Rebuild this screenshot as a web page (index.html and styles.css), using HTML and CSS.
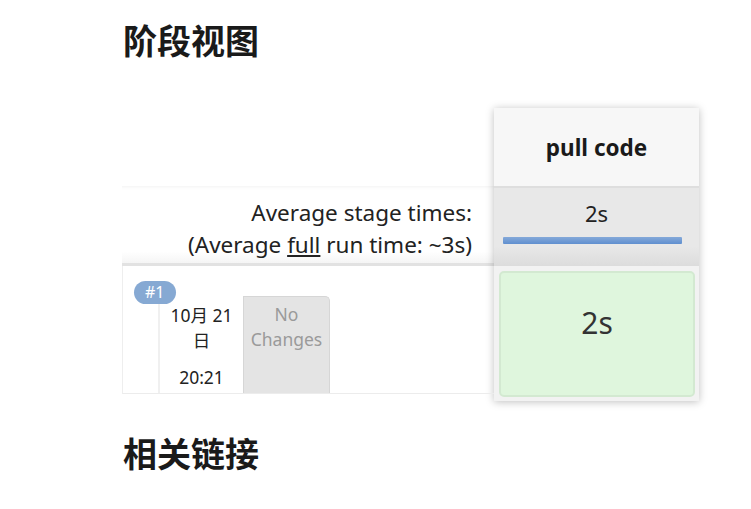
FILE: index.html
```html
<!DOCTYPE html>
<html lang="zh">
<head>
<meta charset="utf-8">
<link rel="stylesheet" href="styles.css">
</head>
<body>
<main class="page">
  <h2 class="heading heading-top">阶段视图</h2>
  <section class="stage-view">
    <div class="labels">
      <div class="labels-head"></div>
      <div class="avg-label">
        <div>Average stage times:</div>
        <div>(Average <span class="u">full</span> run time: ~3s)</div>
      </div>
      <div class="build-row">
        <span class="badge">#1</span>
        <div class="date-cell">
          <div class="date">10月 21<br>日</div>
          <div class="time">20:21</div>
        </div>
        <div class="changes">No<br>Changes</div>
      </div>
    </div>
    <div class="stage-col">
      <div class="stage-head">pull code</div>
      <div class="stage-avg">
        <div class="avg-val">2s</div>
        <div class="avg-bar"></div>
      </div>
      <div class="stage-cells">
        <div class="cell-ok">2s</div>
      </div>
    </div>
  </section>
  <h2 class="heading heading-bottom">相关链接</h2>
</main>
</body>
</html>
```

FILE: styles.css
```css
html, body {
  margin: 0;
  padding: 0;
  background: #fff;
}
body {
  font-family: "Noto Sans", "Noto Sans CJK SC", sans-serif;
  color: #333;
}
.page {
  padding-left: 122px;
  padding-top: 1px;
}
.heading {
  font-family: "Noto Sans CJK SC", sans-serif;
  font-size: 34px;
  font-weight: 700;
  color: #1a1a1a;
  line-height: 40px;
  margin: 0;
  padding-left: 1px;
}
.heading-top {
  margin-top: 19px;
}
.heading-bottom {
  margin-top: 32px;
}
.stage-view {
  display: flex;
  margin-top: 48px;
}
.labels {
  width: 372px;
  display: flex;
  flex-direction: column;
}
.labels-head {
  height: 78px;
}
.avg-label {
  height: 80px;
  box-sizing: border-box;
  text-align: right;
  padding: 11px 22px 0 0;
  font-size: 22.5px;
  line-height: 32px;
  color: #222;
  border-bottom: 3px solid #e2e2e2;
  box-shadow: -1px 3px 4px -3px rgba(0,0,0,0.08) inset;
  background: linear-gradient(#fff 85%, #f5f5f5);
}
.u {
  text-decoration: underline;
}
.build-row {
  position: relative;
  height: 128px;
  box-sizing: border-box;
  display: flex;
  align-items: flex-end;
  padding-left: 35px;
  border-bottom: 1px solid #ececec;
  border-left: 1px solid #eeeeee;
}
.badge {
  position: absolute;
  left: 11px;
  top: 15px;
  background: #86a9d3;
  color: #fff;
  font-size: 16px;
  line-height: 23px;
  padding: 0 11px;
  border-radius: 12px;
}
.date-cell {
  width: 85px;
  height: 97px;
  box-sizing: border-box;
  border-left: 2px solid #f0f0f0;
  text-align: center;
  font-size: 17.5px;
  line-height: 25px;
  color: #222;
  padding-top: 7px;
}
.time {
  margin-top: 12px;
}
.changes {
  width: 87px;
  height: 97px;
  box-sizing: border-box;
  background: #e4e4e4;
  border: 1px solid #d6d6d6;
  border-bottom: none;
  border-radius: 0 5px 0 0;
  text-align: center;
  color: #9a9a9a;
  font-size: 17.5px;
  line-height: 25px;
  padding-top: 5px;
}
.stage-col {
  width: 205px;
  display: flex;
  flex-direction: column;
  box-shadow: 0 1px 8px rgba(0,0,0,0.25);
  background: #f0f0f0;
}
.stage-head {
  height: 78px;
  background: #f7f7f7;
  display: flex;
  align-items: center;
  justify-content: center;
  font-size: 22.5px;
  font-weight: 700;
  color: #1a1a1a;
  padding-top: 1px;
  box-sizing: border-box;
}
.stage-avg {
  height: 80px;
  box-sizing: border-box;
  border-top: 2px solid #dedede;
  background: linear-gradient(#e8e8e8 75%, #dcdcdc);
  padding-top: 10px;
  text-align: center;
}
.avg-val {
  font-size: 22px;
  line-height: 30px;
  color: #222;
}
.avg-bar {
  height: 7px;
  margin: 9px 17px 0 9px;
  background: linear-gradient(#85a9d9, #5f8fcf);
  border-radius: 1px;
}
.stage-cells {
  padding: 5px 4px 4px 5px;
  background: #f2f2f2;
}
.cell-ok {
  height: 126px;
  box-sizing: border-box;
  background: #dff6dd;
  border: 2px solid #d3e9d1;
  border-radius: 5px;
  display: flex;
  align-items: center;
  justify-content: center;
  font-size: 30px;
  color: #333;
  padding-bottom: 24px;
}
```
